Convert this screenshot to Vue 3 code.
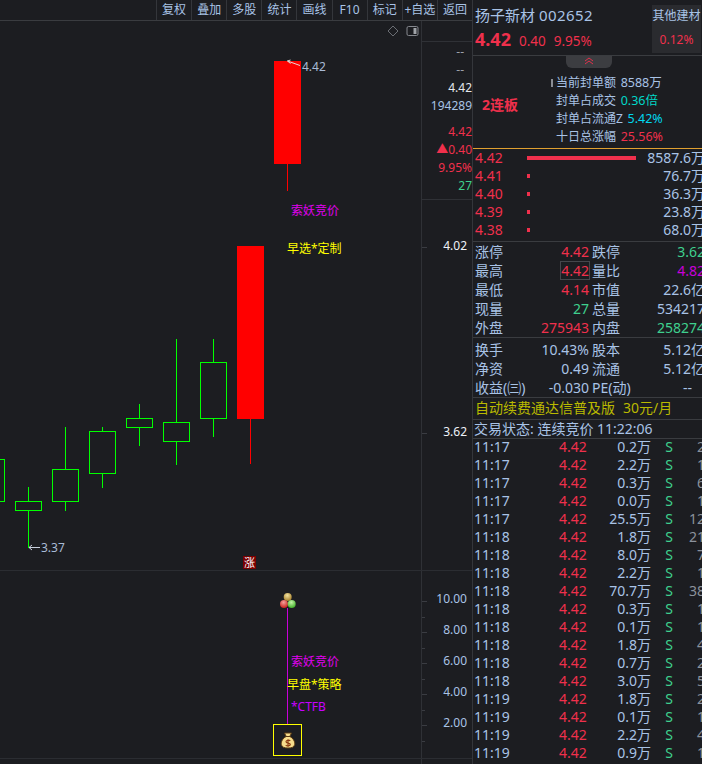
<template>
  <div class="screen">
    <div class="left">
      <div class="toolbar">
        <span class="tool-gap"></span>
        <span v-for="t in tools" :key="t" class="tool">{{ t }}</span>
      </div>
      <div class="upper">
        <div class="chart">
          <div class="chart-icons">
            <svg width="12" height="12" viewBox="0 0 12 12"><path d="M6 1 L11 6 L6 11 L1 6 Z" fill="none" stroke="#6b6e74" /></svg>
            <svg width="13" height="12" viewBox="0 0 13 12"><rect x="1" y="1.5" width="11" height="9" rx="1.5" fill="none" stroke="#85888e" /><rect x="7.500" y="3" width="3" height="6" fill="#a0a3a8" /></svg>
          </div>
          <svg class="kline" width="421" height="549" viewBox="0 21 421 549">
            <g v-for="c in candles" :key="c.x">
              <line :x1="c.x + 13.5" :x2="c.x + 13.5" :y1="c.high" :y2="c.low" :stroke="c.color" />
              <rect v-if="c.up" :x="c.x + 0.5" :y="c.top + 0.5" width="26" :height="c.bottom - c.top" fill="#1c1d21" stroke="#00ff00" />
              <rect v-else :x="c.x" :y="c.top" width="27" :height="c.bottom - c.top" fill="#ff0000" />
            </g>
            <path d="M287.500 61 L300 65.500 M287.500 61 L290.500 60 M287.500 61 L290.500 63.500" stroke="#e4d8d8" fill="none" />
            <path d="M29 547.500 L40 547.500 M29 547.500 L32 545 M29 547.500 L32 550" stroke="#c8cfdc" fill="none" />
          </svg>
          <span class="note hi-label" style="left:302px;top:38px">4.42</span>
          <span class="note hi-label" style="left:41px;top:519px">3.37</span>
          <span class="note purple" style="left:291px;top:182px">索妖竞价</span>
          <span class="note yellow" style="left:287px;top:220px">早选*定制</span>
          <span class="zhang">涨</span>
        </div>
        <div class="axis">
          <div class="axis-top"></div>
          <div class="axis-info">
            <span class="grey">--</span>
            <span class="grey">--</span>
            <span class="white">4.42</span>
            <span class="blue">194289</span>
            <span class="red gap">4.42</span>
            <span class="red">▲0.40</span>
            <span class="red">9.95%</span>
            <span class="green">27</span>
          </div>
          <span class="axis-price" style="top:217px">4.02</span>
          <span class="axis-price" style="top:403px">3.62</span>
          <i class="axis-tick" style="top:226px"></i>
          <i class="axis-tick" style="top:412px"></i>
        </div>
      </div>
      <div class="lower">
        <div class="chart">
          <svg class="balls" width="18" height="18" viewBox="0 0 18 18">
            <defs>
              <radialGradient id="ballGold" cx="0.45" cy="0.3" r="0.7"><stop offset="0" stop-color="#f2e2a0" /><stop offset="1" stop-color="#a67f28" /></radialGradient>
              <radialGradient id="ballRed" cx="0.45" cy="0.3" r="0.7"><stop offset="0" stop-color="#f4a09a" /><stop offset="1" stop-color="#c8201c" /></radialGradient>
              <radialGradient id="ballGreen" cx="0.45" cy="0.3" r="0.7"><stop offset="0" stop-color="#c4f4a8" /><stop offset="1" stop-color="#40b028" /></radialGradient>
            </defs>
            <circle cx="8.700" cy="5" r="4" fill="url(#ballGold)" />
            <circle cx="5" cy="12" r="4" fill="url(#ballRed)" />
            <circle cx="12.700" cy="12" r="4" fill="url(#ballGreen)" />
          </svg>
          <i class="stem"></i>
          <span class="note purple" style="left:291px;top:83px">索妖竞价</span>
          <span class="note yellow" style="left:287px;top:106px">早盘*策略</span>
          <span class="note violet" style="left:291px;top:128px">*CTFB</span>
          <div class="bag-box">
            <svg width="16" height="17" viewBox="0 0 16 17">
              <path d="M4.500 1 L11.500 1 L9.800 4.500 C13 6 15.200 9.500 14.700 12.500 C14.200 15.500 11 16 8 16 C5 16 1.800 15.500 1.300 12.500 C0.800 9.500 3 6 6.200 4.500 Z" fill="#f6dc8c" stroke="#5a3a12" />
              <path d="M6 4.500 H10" stroke="#5a3a12" />
              <path d="M10.300 8.800 C9 7.800 6 8 6 9.700 C6 11.500 10.300 10.800 10.300 12.500 C10.300 14 7 14.200 5.700 13.200 M8 7.300 V14.700" fill="none" stroke="#8a3a12" stroke-width="1.200" />
            </svg>
          </div>
        </div>
        <div class="axis">
          <template v-for="s in subScale" :key="s.label">
            <span class="axis-sub" :style="{ top: s.top + 'px' }">{{ s.label }}</span>
            <i class="axis-tick" :style="{ top: s.top + 10 + 'px' }"></i>
            <i class="axis-tick short" :style="{ top: s.top + 26 + 'px' }"></i>
          </template>
        </div>
      </div>
      <div class="foot"><div class="foot-chart"></div></div>
    </div>

    <div class="panel">
      <div class="head">
        <div class="head-main">
          <div class="stock-name">扬子新材 <span class="code">002652</span></div>
          <div class="stock-price">
            <b>4.42</b><span>0.40</span><span>9.95%</span>
          </div>
        </div>
        <div class="sector">
          <div class="sector-name">其他建材</div>
          <div class="sector-pct">0.12%</div>
        </div>
      </div>
      <div class="limit">
        <div class="fold">
          <svg width="12" height="8" viewBox="0 0 12 8"><path d="M2 4 L6 1 L10 4 M2 7 L6 4 L10 7" fill="none" stroke="#e0324c" /></svg>
        </div>
        <div class="board">2连板</div>
        <div class="limit-rows">
          <div><i class="pin"></i>当前封单额 <span class="blue">8588万</span></div>
          <div>封单占成交 <span class="cyan">0.36倍</span></div>
          <div>封单占流通Z <span class="cyan2">5.42%</span></div>
          <div>十日总涨幅 <span class="red">25.56%</span></div>
        </div>
      </div>
      <div class="bids">
        <div v-for="b in bids" :key="b.price" class="bid">
          <span class="red">{{ b.price }}</span>
          <span class="bid-track"><i :style="{ width: b.bar + 'px' }"></i></span>
          <span class="bid-vol">{{ b.vol }}</span>
        </div>
      </div>
      <div class="stats first">
        <div v-for="r in stats1" :key="r[0]" class="stat">
          <span class="k">{{ r[0] }}</span>
          <span class="v" :class="r[2]"><span :class="{ boxed: r[0] === '最高' }">{{ r[1] }}</span></span>
          <span class="k k2">{{ r[3] }}</span>
          <span class="v2" :class="r[5]">{{ r[4] }}</span>
        </div>
      </div>
      <div class="stats second">
        <div v-for="r in stats2" :key="r[0]" class="stat">
          <span class="k">{{ r[0] }}</span>
          <span class="v" :class="r[2]">{{ r[1] }}</span>
          <span class="k k2">{{ r[3] }}</span>
          <span class="v2" :class="[r[5], { dash: r[4] === '--' }]">{{ r[4] }}</span>
        </div>
      </div>
      <div class="promo">自动续费通达信普及版<em>30元/月</em></div>
      <div class="status">交易状态: 连续竞价 11:22:06</div>
      <div class="trades">
        <div v-for="(t, i) in trades" :key="i" class="trade">
          <span class="t-time">{{ t[0] }}</span>
          <span class="t-price red">4.42</span>
          <span class="t-vol">{{ t[1] }}</span>
          <span class="t-side green">S</span>
          <span class="t-num">{{ t[2] }}</span>
        </div>
      </div>
    </div>
  </div>
</template>

<script setup>
const tools = ['复权', '叠加', '多股', '统计', '画线', 'F10', '标记', '+自选', '返回']

// 从左到右的 K 线，x 为实体左边
const mkUp = (x, top, bottom, high, low) => ({ x, top, bottom, high, low, up: true, color: '#00ff00' })
const mkDown = (x, top, bottom, high, low) => ({ x, top, bottom, high, low, up: false, color: '#ff0000' })
const candles = [
  mkUp(-22, 459, 501, 459, 501),
  mkUp(15, 501, 510, 487, 548),
  mkUp(52, 469, 501, 427, 511),
  mkUp(89, 431, 473, 427, 488),
  mkUp(126, 418, 427, 404, 446),
  mkUp(163, 422, 441, 339, 465),
  mkUp(200, 362, 418, 339, 437),
  mkDown(237, 246, 419, 246, 464),
  mkDown(274, 61, 164, 61, 191)
]

const subScale = [
  { label: '10.00', top: 20 },
  { label: '8.00', top: 51 },
  { label: '6.00', top: 82 },
  { label: '4.00', top: 113 },
  { label: '2.00', top: 144 }
]

const bids = [
  { price: '4.42', bar: 109, vol: '8587.6万' },
  { price: '4.41', bar: 3, vol: '76.7万' },
  { price: '4.40', bar: 3, vol: '36.3万' },
  { price: '4.39', bar: 3, vol: '23.8万' },
  { price: '4.38', bar: 3, vol: '68.0万' }
]

const stats1 = [
  ['涨停', '4.42', 'red', '跌停', '3.62', 'green'],
  ['最高', '4.42', 'red', '量比', '4.82', 'magenta'],
  ['最低', '4.14', 'red', '市值', '22.6亿', 'blue'],
  ['现量', '27', 'green', '总量', '534217', 'blue'],
  ['外盘', '275943', 'red', '内盘', '258274', 'green']
]

const stats2 = [
  ['换手', '10.43%', 'blue', '股本', '5.12亿', 'blue'],
  ['净资', '0.49', 'blue', '流通', '5.12亿', 'blue'],
  ['收益(㈢)', '-0.030', 'blue', 'PE(动)', '--', 'blue']
]

const trades = [
  ['11:17', '0.2万', '2'], ['11:17', '2.2万', '1'], ['11:17', '0.3万', '6'],
  ['11:17', '0.0万', '1'], ['11:17', '25.5万', '12'], ['11:18', '1.8万', '21'],
  ['11:18', '8.0万', '7'], ['11:18', '2.2万', '1'], ['11:18', '70.7万', '38'],
  ['11:18', '0.3万', '1'], ['11:18', '0.1万', '1'], ['11:18', '1.8万', '4'],
  ['11:18', '0.7万', '2'], ['11:18', '3.0万', '5'], ['11:19', '1.8万', '2'],
  ['11:19', '0.1万', '1'], ['11:19', '2.2万', '4'], ['11:19', '0.9万', '1']
]
</script>

<style>
html, body {
  margin: 0;
  background: #1c1d21;
  overflow: hidden;
}
</style>

<style scoped>
.screen {
  display: flex;
  width: 702px;
  height: 764px;
  overflow: hidden;
  background: #1c1d21;
  color: #a9c3e6;
  font: 14px/18px "Noto Sans", "Noto Sans CJK SC", sans-serif;
}
.left {
  width: 472px;
  flex: none;
  display: flex;
  flex-direction: column;
  border-right: 1px solid #34363b;
}
.toolbar {
  height: 21px;
  flex: none;
  display: flex;
  border-bottom: 1px solid #3a3c40;
  box-sizing: border-box;
}
.tool-gap {
  width: 156px;
}
.tool {
  flex: 1;
  min-width: 0;
  overflow: hidden;
  line-height: 20px;
  text-align: center;
  white-space: nowrap;
  border-left: 1px solid #34363b;
  font-size: 12px;
}
.upper {
  height: 550px;
  flex: none;
  display: flex;
  border-bottom: 1px solid #2b2d32;
  box-sizing: border-box;
}
.lower {
  height: 188px;
  flex: none;
  display: flex;
  border-bottom: 1px solid #2b2d32;
  box-sizing: border-box;
}
.foot {
  flex: 1;
}
.foot-chart {
  width: 421px;
  height: 100%;
  border-right: 1px solid #2f3136;
}
.chart {
  position: relative;
  width: 421px;
  flex: none;
  overflow: hidden;
  border-right: 1px solid #2f3136;
}
.chart-icons {
  position: absolute;
  top: 4px;
  right: 2px;
  display: flex;
  gap: 7px;
}
.kline {
  display: block;
}
.note {
  position: absolute;
  white-space: nowrap;
  font-size: 12px;
  line-height: 16px;
}
.hi-label {
  color: #a9bbd6;
}
.purple {
  color: #e000f0;
}
.yellow {
  color: #ffff00;
}
.violet {
  color: #c800ff;
}
.zhang {
  position: absolute;
  left: 243px;
  top: 535px;
  width: 13px;
  height: 13px;
  background: #7a0000;
  color: #fff;
  font-size: 11px;
  line-height: 13px;
  text-align: center;
}
.axis {
  position: relative;
  flex: 1;
  font-size: 12px;
  text-align: right;
}
.axis-top {
  height: 20px;
  border-bottom: 1px solid #2f3136;
}
.axis-info {
  display: flex;
  flex-direction: column;
  height: 158px;
  border-bottom: 1px solid #2f3136;
  box-sizing: border-box;
  line-height: 18px;
  padding-top: 1px;
}
.axis-info .gap {
  margin-top: 8px;
}
.axis-info .grey {
  padding-right: 8px;
}
.axis-price {
  position: absolute;
  right: 5px;
  line-height: 16px;
  color: #eef2f8;
}
.axis-tick {
  position: absolute;
  left: 0;
  width: 5px;
  height: 1px;
  background: #3a3c42;
}
.axis-tick.short {
  width: 3px;
}
.axis-sub {
  position: absolute;
  right: 5px;
  line-height: 16px;
  color: #a9c3e6;
}
.balls {
  position: absolute;
  left: 279px;
  top: 21px;
}
.stem {
  position: absolute;
  left: 287px;
  top: 37px;
  width: 1px;
  height: 116px;
  background: #c800d8;
}
.bag-box {
  position: absolute;
  left: 273px;
  top: 153px;
  width: 27px;
  height: 30px;
  border: 1px solid #ffff00;
  display: flex;
  align-items: center;
  justify-content: center;
}
.panel {
  flex: 1;
  min-width: 0;
  display: flex;
  flex-direction: column;
  overflow: hidden;
}
.head {
  height: 55px;
  flex: none;
  display: flex;
  justify-content: space-between;
  border-bottom: 1px solid #3a3c40;
}
.head-main {
  padding: 4px 0 0 2px;
}
.stock-name {
  font-size: 15px;
  line-height: 22px;
  white-space: nowrap;
}
.code {
  letter-spacing: 0.45px;
}
.stock-price {
  display: flex;
  align-items: baseline;
  gap: 8px;
  margin-top: 2px;
  color: #f0304c;
  font-size: 13.5px;
  line-height: 22px;
}
.stock-price b {
  font-size: 18px;
}
.sector {
  width: 49px;
  margin: 5px 1px 2px 0;
  background: #2a2b2f;
  text-align: center;
}
.sector-name {
  line-height: 22px;
  font-size: 12px;
  white-space: nowrap;
}
.sector-pct {
  margin-top: 3px;
  line-height: 20px;
  font-size: 12px;
  color: #f0304c;
}
.limit {
  position: relative;
  height: 92px;
  flex: none;
  display: flex;
  border-bottom: 1px solid #e0a030;
}
.fold {
  position: absolute;
  left: 93px;
  top: 0;
  width: 46px;
  height: 12px;
  border-radius: 0 0 6px 6px;
  background: #3c3d41;
  text-align: center;
  line-height: 8px;
}
.board {
  width: 83px;
  padding: 40px 0 0 9px;
  box-sizing: border-box;
  font-weight: bold;
  color: #f0304c;
  white-space: nowrap;
}
.limit-rows {
  padding-top: 18px;
  font-size: 12px;
  white-space: nowrap;
}
.limit-rows span {
  margin-left: 1.5px;
  font-size: 12.5px;
}
.pin {
  position: absolute;
  left: 78px;
  top: 23px;
  width: 2px;
  height: 8px;
  background: #8a8d93;
}
.bids {
  flex: none;
  height: 93px;
  border-bottom: 1px solid #3a3c40;
  box-sizing: border-box;
}
.bid {
  display: flex;
  align-items: center;
  height: 18px;
  padding-left: 2px;
}
.bid-track {
  flex: 1;
  margin-left: 24px;
}
.bid-track i {
  display: block;
  height: 4px;
  background: #f0304c;
}
.bid-vol {
  white-space: nowrap;
  margin-right: -3px;
}
.stats {
  flex: none;
  padding-left: 2px;
  border-bottom: 1px solid #3a3c40;
  box-sizing: border-box;
}
.first {
  height: 96px;
}
.second {
  height: 60px;
  padding-top: 2px;
}
.stat {
  display: flex;
  height: 19px;
  align-items: center;
  white-space: nowrap;
}
.k {
  width: 44px;
  flex: none;
  white-space: nowrap;
}
.v {
  width: 70px;
  flex: none;
  text-align: right;
}
.k2 {
  width: 50px;
  margin-left: 3px;
}
.v2 {
  flex: 1;
  margin-right: -3px;
  text-align: right;
  white-space: nowrap;
}
.v2.dash {
  padding-right: 13px;
}
.boxed {
  display: inline-block;
  line-height: 17px;
  outline: 1px solid #45474c;
}
.promo {
  height: 22px;
  flex: none;
  padding-left: 2px;
  line-height: 20px;
  color: #b9b900;
  border-bottom: 1px solid #3a3c40;
  box-sizing: border-box;
  white-space: nowrap;
}
.promo em {
  font-style: normal;
  margin-left: 8px;
}
.status {
  height: 19px;
  flex: none;
  padding-left: 1px;
  line-height: 17px;
  border-bottom: 1px solid #3a3c40;
  box-sizing: border-box;
  white-space: nowrap;
}
.trades {
  flex: 1;
  overflow: hidden;
  margin-top: -1px;
}
.trade {
  display: flex;
  height: 18px;
  line-height: 18px;
  padding-left: 1px;
  white-space: nowrap;
}
.t-time {
  width: 85px;
  flex: none;
}
.t-price {
  width: 28px;
  flex: none;
}
.t-vol {
  width: 64px;
  flex: none;
  text-align: right;
}
.t-side {
  width: 36px;
  flex: none;
  text-align: center;
}
.t-num {
  flex: 1;
  margin-right: -3px;
  text-align: right;
  color: #8b929c;
}
.grey {
  color: #9aa0aa;
}
.white {
  color: #e4e8ee;
}
.blue {
  color: #a9c3e6;
}
.red {
  color: #f0304c;
}
.green {
  color: #3fd08e;
}
.cyan {
  color: #00d8c8;
}
.cyan2 {
  color: #00d8f0;
}
.magenta {
  color: #c800d8;
}
</style>
